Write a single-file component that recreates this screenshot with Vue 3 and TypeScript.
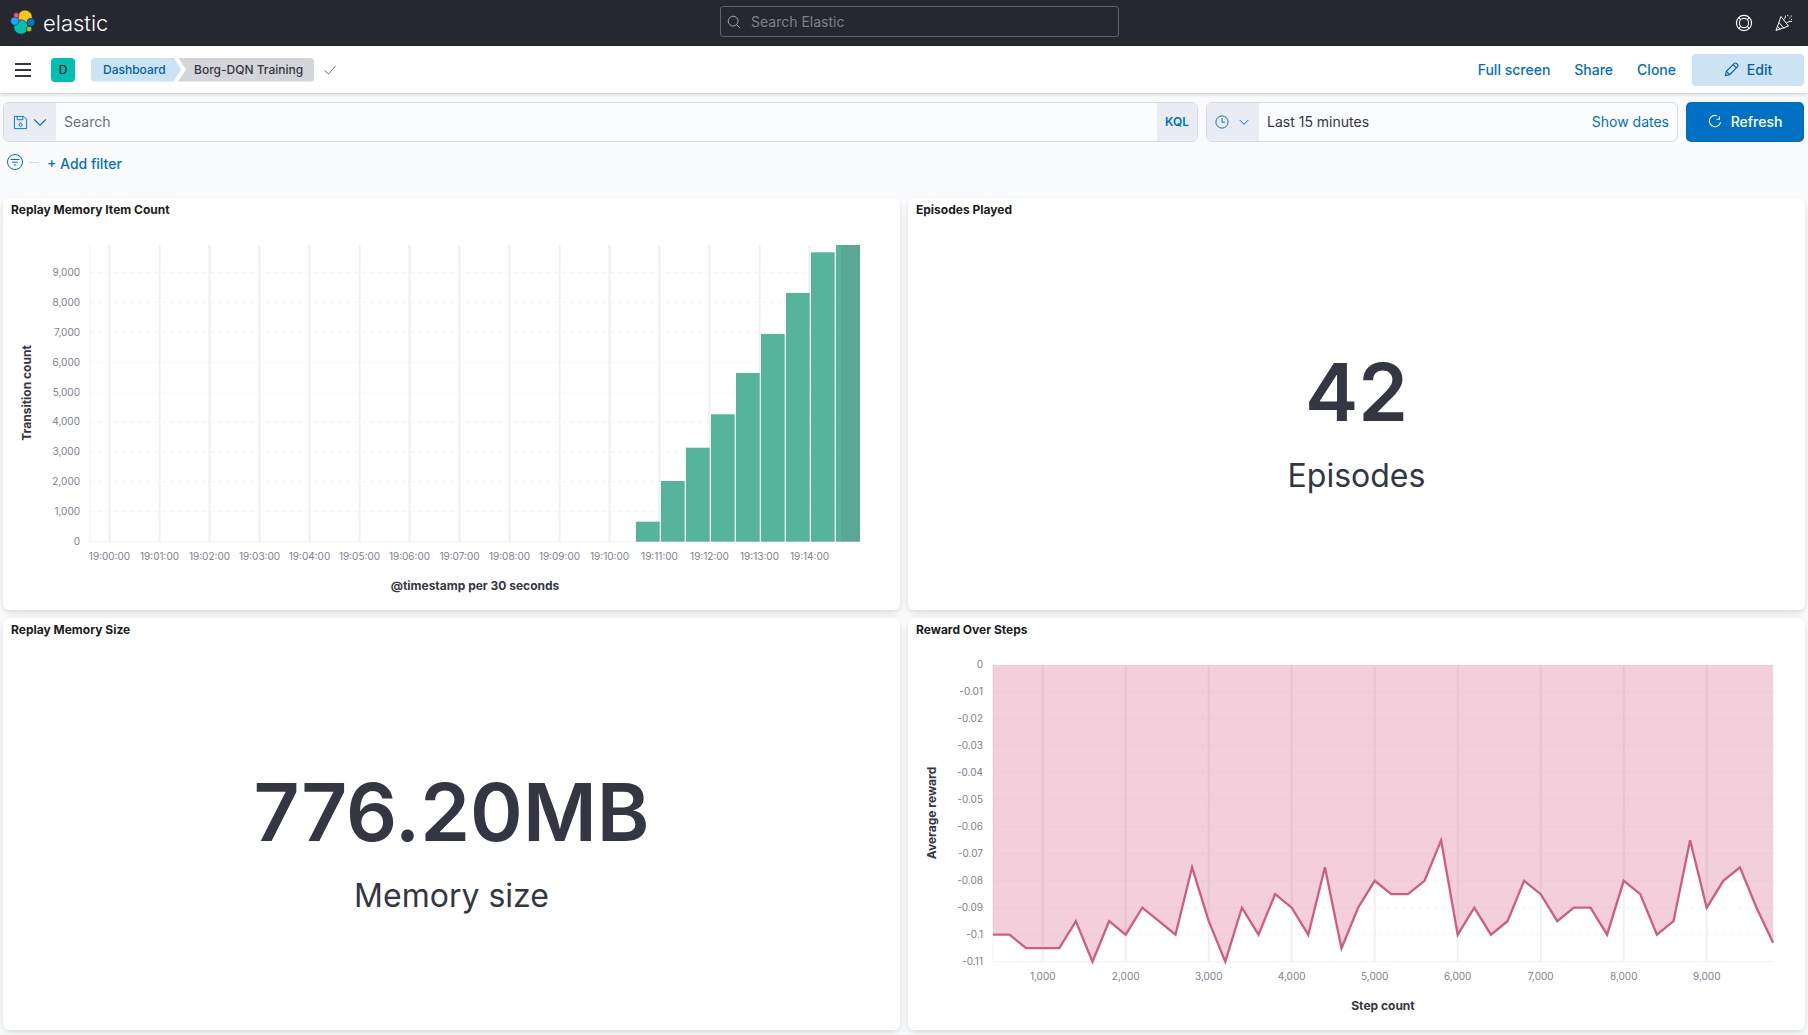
<script setup lang="ts">
const yTicks1 = [0, 1, 2, 3, 4, 5, 6, 7, 8, 9].map((n) => ({
  y: 541.7 - n * 29.93,
  label: n === 0 ? '0' : `${n},000`,
}))
const xTicks1 = Array.from({ length: 15 }, (_, i) => ({
  x: 109.5 + i * 50,
  label: `19:${String(i).padStart(2, '0')}:00`,
}))
const barTops = [521.7, 481, 447.7, 414.3, 373, 334, 293, 252.3]
const bars = barTops.map((top, i) => ({ x: 636 + i * 25, y: top, h: 541.7 - top }))

const yTicks2 = Array.from({ length: 12 }, (_, i) => ({
  y: 665 + i * 26.97,
  label: i === 0 ? '0' : i === 10 ? '-0.1' : `-0.${String(i).padStart(2, '0')}`,
}))
const xTicks2 = [1, 2, 3, 4, 5, 6, 7, 8, 9].map((n) => ({
  x: 1042.7 + (n - 1) * 83,
  label: `${n},000`,
}))
const rewards = [
  -0.1, -0.1, -0.105, -0.105, -0.105, -0.095, -0.11, -0.095, -0.1, -0.09, -0.095, -0.1, -0.075, -0.095,
  -0.11, -0.09, -0.1, -0.085, -0.09, -0.1, -0.075, -0.105, -0.09, -0.08, -0.085, -0.085, -0.08, -0.065,
  -0.1, -0.09, -0.1, -0.095, -0.08, -0.085, -0.095, -0.09, -0.09, -0.1, -0.08, -0.085, -0.1, -0.095,
  -0.065, -0.09, -0.08, -0.075, -0.09, -0.103,
]
const points = rewards.map((v, i) => `${(992.9 + i * 16.6).toFixed(1)},${(665 - v * 2697).toFixed(1)}`)
const linePath = `M${points.join(' L')}`
const areaPath = `M992.9,665 L${points.join(' L')} L${(992.9 + 47 * 16.6).toFixed(1)},665 Z`
</script>

<template>
  <div class="page">
    <header class="topbar">
      <div class="brand">
        <svg class="logo" width="26" height="26" viewBox="10 10 26 26">
          <g stroke="#25282f" stroke-width="0.6">
            <circle cx="25" cy="17.3" r="7.2" fill="#fec514" />
            <circle cx="21" cy="27" r="7.2" fill="#00bfb3" />
            <circle cx="14.8" cy="21" r="4.2" fill="#1ba9f5" />
            <circle cx="31" cy="22.3" r="4" fill="#0077cc" />
            <circle cx="16.3" cy="15.2" r="2.7" fill="#f04e98" />
            <circle cx="29" cy="29" r="2.8" fill="#93c90e" />
          </g>
        </svg>
        <span class="wordmark">elastic</span>
      </div>
      <div class="global-search">
        <svg width="14" height="14" viewBox="0 0 16 16" fill="none" stroke="#a6a8ad" stroke-width="1.1">
          <circle cx="7" cy="7" r="5.6" />
          <path d="M11 11l4 4" />
        </svg>
        <span>Search Elastic</span>
      </div>
      <div class="top-icons">
        <svg width="18" height="18" viewBox="0 0 18 18" fill="none" stroke="#fff" stroke-width="1.1">
          <circle cx="9" cy="9" r="7.6" />
          <circle cx="9" cy="9" r="4.6" />
          <path d="M3.7 3.7l2 2M14.3 3.7l-2 2M3.7 14.3l2-2M14.3 14.3l-2-2" />
        </svg>
        <svg width="18" height="18" viewBox="0 0 18 18" fill="none" stroke="#fff" stroke-width="1">
          <path d="M1 16.5L6 2.5l7.5 9.5L1 16.5z" />
          <path d="M4 8.5l5 6M2.6 12.5l2.8 3" />
          <path d="M8.5 5.5c1.5-.8 2-2.200 2-4M11 9.5c2-1.800 3.500-2.200 6-2" />
          <path d="M12.8 1v1.200M14.4 4.200l1-.8M16.2 1.500v1.200M15.8 5.600h1.200" />
        </svg>
      </div>
    </header>

    <nav class="subbar">
      <div class="menu"><i></i><i></i><i></i></div>
      <div class="avatar">D</div>
      <div class="crumbs">
        <span class="crumb first">Dashboard</span>
        <span class="crumb last">Borg-DQN Training</span>
      </div>
      <svg class="check" width="14" height="14" viewBox="0 0 14 14" fill="none" stroke="#69707d" stroke-width="1">
        <path d="M1.5 7.5l4 3.5 7-8" />
      </svg>
      <div class="actions">
        <a>Full screen</a>
        <a>Share</a>
        <a>Clone</a>
        <button class="edit">
          <svg width="15" height="15" viewBox="0 0 16 16" fill="none" stroke="#0061a6" stroke-width="1.2">
            <path d="M1.5 14.5l1-4.500 8.500-8.500a1.600 1.600 0 0 1 2.300 0l1.200 1.200a1.600 1.600 0 0 1 0 2.300L6 13.500l-4.500 1z" />
            <path d="M2.5 10l3.500 3.500M9.800 2.800l3.400 3.400" />
          </svg>
          Edit
        </button>
      </div>
    </nav>

    <section class="querybar">
      <div class="field search-field">
        <div class="prepend save">
          <svg width="15" height="15" viewBox="0 0 16 16" fill="none" stroke="#0071c2" stroke-width="1">
            <path d="M1.5 1.5h10l3 3v10h-13z" />
            <path d="M4.5 1.5v3.500h6v-3.500" />
            <circle cx="8" cy="10.5" r="1.7" />
          </svg>
          <svg width="14" height="14" viewBox="0 0 13 13" fill="none" stroke="#0071c2" stroke-width="1.1">
            <path d="M1 4l5.500 5.500L12 4" />
          </svg>
        </div>
        <div class="placeholder">Search</div>
        <div class="kql">KQL</div>
      </div>
      <div class="field time-field">
        <div class="prepend clock">
          <svg width="14" height="14" viewBox="0 0 16 16" fill="none" stroke="#0071c2" stroke-width="1.1">
            <circle cx="8" cy="8" r="7" />
            <path d="M8 3.5v4.800h3.500" />
          </svg>
          <svg width="10" height="10" viewBox="0 0 13 13" fill="none" stroke="#0071c2" stroke-width="1.3">
            <path d="M1 4l5.500 5.500L12 4" />
          </svg>
        </div>
        <div class="range">Last 15 minutes</div>
        <a class="dates">Show dates</a>
      </div>
      <button class="refresh">
        <svg width="14" height="14" viewBox="0 0 16 16" fill="none" stroke="#fff" stroke-width="1.2">
          <path d="M13 2.8v3.200h-3.200" />
          <path d="M9.3 1.7A6.500 6.500 0 1 0 14.500 8.500" transform="rotate(8 8 8)" />
        </svg>
        Refresh
      </button>
    </section>

    <section class="filterbar">
      <svg width="16" height="16" viewBox="0 0 16 16" fill="none" stroke="#0071c2" stroke-width="1">
        <circle cx="8" cy="8" r="7.5" />
        <path d="M3.5 5.5h9M5.200 8.200h5.600M6.800 10.900h2.400" />
      </svg>
      <i class="dash"></i>
      <a>+ Add filter</a>
    </section>

    <main class="grid">
      <article class="panel">
        <h3>Replay Memory Item Count</h3>
        <svg class="chart" width="897" height="388" viewBox="3 222 897 388">
          <line v-for="t in yTicks1.slice(1)" :key="t.label" class="hgrid" x1="90" x2="860" :y1="t.y" :y2="t.y" />
          <line v-for="t in xTicks1" :key="t.label" class="vgrid" :x1="t.x" :x2="t.x" y1="245" y2="541.7" />
          <line class="axis" x1="90" x2="90" y1="245" y2="541.7" />
          <line class="axis" x1="90" x2="860" y1="541.7" y2="541.7" />
          <rect
            v-for="b in bars"
            :key="b.x"
            class="bar"
            :x="b.x"
            :y="b.y"
            width="23.7"
            :height="b.h"
          />
          <rect class="bar" x="836" y="245" width="5" height="296.7" />
          <rect class="bar-dim" x="841" y="245" width="19" height="296.7" />
          <text v-for="t in yTicks1" :key="t.label" class="tick" x="80" :y="t.y + 3.5" text-anchor="end">{{ t.label }}</text>
          <text v-for="t in xTicks1" :key="t.label" class="tick" :x="t.x" y="560" text-anchor="middle">{{ t.label }}</text>
          <text class="axis-title" x="475" y="590" text-anchor="middle">@timestamp per 30 seconds</text>
          <text class="axis-title" transform="translate(31 393) rotate(-90)" text-anchor="middle">Transition count</text>
        </svg>
      </article>

      <article class="panel">
        <h3>Episodes Played</h3>
        <div class="metric">
          <div class="value">42</div>
          <div class="label">Episodes</div>
        </div>
      </article>

      <article class="panel">
        <h3>Replay Memory Size</h3>
        <div class="metric">
          <div class="value">776.20MB</div>
          <div class="label">Memory size</div>
        </div>
      </article>

      <article class="panel">
        <h3>Reward Over Steps</h3>
        <svg class="chart" width="897" height="388" viewBox="908 642 897 388">
          <line v-for="t in yTicks2.slice(0, -1)" :key="t.label" class="hgrid" x1="993" x2="1773" :y1="t.y" :y2="t.y" />
          <line v-for="t in xTicks2" :key="t.label" class="vgrid" :x1="t.x" :x2="t.x" y1="665" y2="961.7" />
          <line class="axis" x1="993" x2="993" y1="665" y2="961.7" />
          <line class="axis" x1="993" x2="1773" y1="961.7" y2="961.7" />
          <path class="area" :d="areaPath" />
          <path class="line" :d="linePath" />
          <text v-for="t in yTicks2" :key="t.label" class="tick" x="983" :y="t.y + 3" text-anchor="end">{{ t.label }}</text>
          <text v-for="t in xTicks2" :key="t.label" class="tick" :x="t.x" y="980" text-anchor="middle">{{ t.label }}</text>
          <text class="axis-title" x="1383" y="1010" text-anchor="middle">Step count</text>
          <text class="axis-title" transform="translate(936 813) rotate(-90)" text-anchor="middle">Average reward</text>
        </svg>
      </article>
    </main>
  </div>
</template>

<style>
html,
body {
  margin: 0;
  background: #fafbfd;
}
</style>

<style scoped>
.page {
  width: 1808px;
  height: 1035px;
  overflow: hidden;
  display: flex;
  flex-direction: column;
  font-family: Inter, 'Liberation Sans', sans-serif;
  color: #343741;
  background: #fafbfd;
  font-size: 14px;
}
.topbar {
  height: 46px;
  flex: none;
  background: #25282f;
  display: flex;
  align-items: center;
}
.brand {
  width: 720px;
  display: flex;
  align-items: center;
  padding-left: 10px;
  box-sizing: border-box;
}
.wordmark {
  color: #fff;
  font-size: 22px;
  font-weight: 300;
  margin-left: 7px;
  line-height: 1;
}
.global-search {
  width: 399px;
  height: 31px;
  margin-bottom: 3px;
  box-sizing: border-box;
  border: 1px solid #5f6268;
  border-radius: 3px;
  display: flex;
  align-items: center;
  gap: 10px;
  padding-left: 6px;
  color: #7f8288;
  font-size: 14px;
}
.top-icons {
  margin-left: auto;
  display: flex;
  gap: 22px;
  padding-right: 15px;
  align-items: center;
}
.subbar {
  height: 47px;
  flex: none;
  background: #fff;
  display: flex;
  align-items: center;
  box-shadow: 0 1px 4px rgba(0, 0, 0, 0.22);
  position: relative;
  z-index: 2;
}
.menu {
  margin-left: 15px;
  width: 16px;
  display: flex;
  flex-direction: column;
  gap: 4px;
}
.menu i {
  display: block;
  height: 2px;
  background: #343741;
}
.avatar {
  margin-left: 20px;
  width: 24px;
  height: 24px;
  border-radius: 4px;
  background: #00bfb3;
  color: #000;
  font-size: 12px;
  display: flex;
  align-items: center;
  justify-content: center;
}
.crumbs {
  margin-left: 16px;
  display: flex;
  font-size: 12px;
  font-weight: 500;
}
.crumb {
  height: 24px;
  display: flex;
  align-items: center;
}
.first {
  width: 90px;
  padding-left: 12px;
  box-sizing: border-box;
  background: #cce3f3;
  color: #0061a6;
  border-radius: 4px 0 0 4px;
  clip-path: polygon(0 0, 92% 0, 100% 50%, 92% 100%, 0 100%);
}
.last {
  width: 136px;
  margin-left: -3px;
  padding-left: 16px;
  box-sizing: border-box;
  background: #d4d5d8;
  color: #343741;
  border-radius: 0 4px 4px 0;
  clip-path: polygon(0 0, 100% 0, 100% 100%, 0 100%, 6% 50%);
}
.check {
  margin-left: 9px;
}
.actions {
  margin-left: auto;
  display: flex;
  align-items: center;
  gap: 24px;
  padding-right: 4px;
  color: #0071c2;
  font-weight: 500;
}
.edit {
  width: 112px;
  height: 32px;
  margin-left: -8px;
  border: 0;
  border-radius: 4px;
  background: #cce3f3;
  color: #0061a6;
  font: inherit;
  display: flex;
  align-items: center;
  justify-content: center;
  gap: 8px;
}
.querybar {
  flex: none;
  margin-top: 9px;
  height: 40px;
  padding: 0 4px 0 3px;
  display: flex;
  gap: 8px;
}
.field {
  display: flex;
  align-items: stretch;
  border: 1px solid #d3dae6;
  border-radius: 6px;
  box-sizing: border-box;
  overflow: hidden;
  background: #fbfcfd;
}
.search-field {
  flex: 1;
}
.time-field {
  width: 472px;
}
.prepend {
  background: #e9edf3;
  display: flex;
  align-items: center;
  flex: none;
}
.save {
  width: 52px;
  padding-left: 9px;
  gap: 5px;
  box-sizing: border-box;
}
.placeholder {
  flex: 1;
  display: flex;
  align-items: center;
  padding: 0 0 2px 8px;
  color: #69707d;
}
.kql {
  width: 40px;
  padding-bottom: 2px;
  background: #e9edf3;
  color: #0071c2;
  font-size: 12px;
  font-weight: 600;
  display: flex;
  align-items: center;
  justify-content: center;
}
.clock {
  width: 52px;
  padding-left: 8px;
  gap: 10px;
  box-sizing: border-box;
}
.range {
  flex: 1;
  display: flex;
  align-items: center;
  padding: 0 0 2px 8px;
}
.dates {
  display: flex;
  align-items: center;
  padding: 0 8px 2px 0;
  color: #0071c2;
}
.refresh {
  width: 118px;
  padding: 0 0 2px;
  border: 0;
  border-radius: 5px;
  background: #0071c2;
  color: #fff;
  font: inherit;
  font-weight: 500;
  display: flex;
  align-items: center;
  justify-content: center;
  gap: 9px;
}
.filterbar {
  flex: none;
  height: 56px;
  box-sizing: border-box;
  padding: 12px 0 0 7px;
  display: flex;
  align-items: flex-start;
  color: #0071c2;
  font-weight: 500;
}
.dash {
  width: 10px;
  height: 1px;
  background: #d3dae6;
  margin: 8px 8px 0 6px;
}
.filterbar a {
  line-height: 20px;
}
.grid {
  flex: none;
  padding-left: 3px;
  display: grid;
  grid-template-columns: 897px 897px;
  grid-template-rows: 412px 412px;
  gap: 8px;
}
.panel {
  background: #fff;
  border-radius: 6px;
  display: flex;
  flex-direction: column;
  overflow: hidden;
  box-shadow: 0 1px 4px -1px rgba(0, 0, 0, 0.08), 0 3px 8px -1px rgba(0, 0, 0, 0.06), 0 6px 12px -1px rgba(0, 0, 0, 0.05);
}
h3 {
  margin: 0;
  height: 24px;
  flex: none;
  padding: 4px 8px 0;
  box-sizing: border-box;
  font-size: 12px;
  line-height: 16px;
  font-weight: 700;
  color: #1a1c21;
}
.chart {
  display: block;
}
.metric {
  flex: 1;
  padding-top: 7px;
  display: flex;
  flex-direction: column;
  align-items: center;
  justify-content: center;
  gap: 17px;
  line-height: 1.2;
}
.value {
  font-size: 80px;
  font-weight: 600;
}
.label {
  font-size: 32px;
}
.hgrid {
  stroke: #f1f3f6;
  stroke-width: 1;
  stroke-dasharray: 4 4;
}
.vgrid {
  stroke: #eff0f5;
  stroke-width: 2;
}
.axis {
  stroke: #f1f2f6;
  stroke-width: 1;
}
.bar {
  fill: #56b49a;
}
.bar-dim {
  fill: #5aa796;
}
.tick {
  font-size: 10px;
  fill: #7c818c;
}
.axis-title {
  font-size: 12px;
  font-weight: 700;
  fill: #343741;
}
.area {
  fill: #d36086;
  fill-opacity: 0.3;
}
.line {
  fill: none;
  stroke: #d05c84;
  stroke-width: 2.3;
}
</style>
